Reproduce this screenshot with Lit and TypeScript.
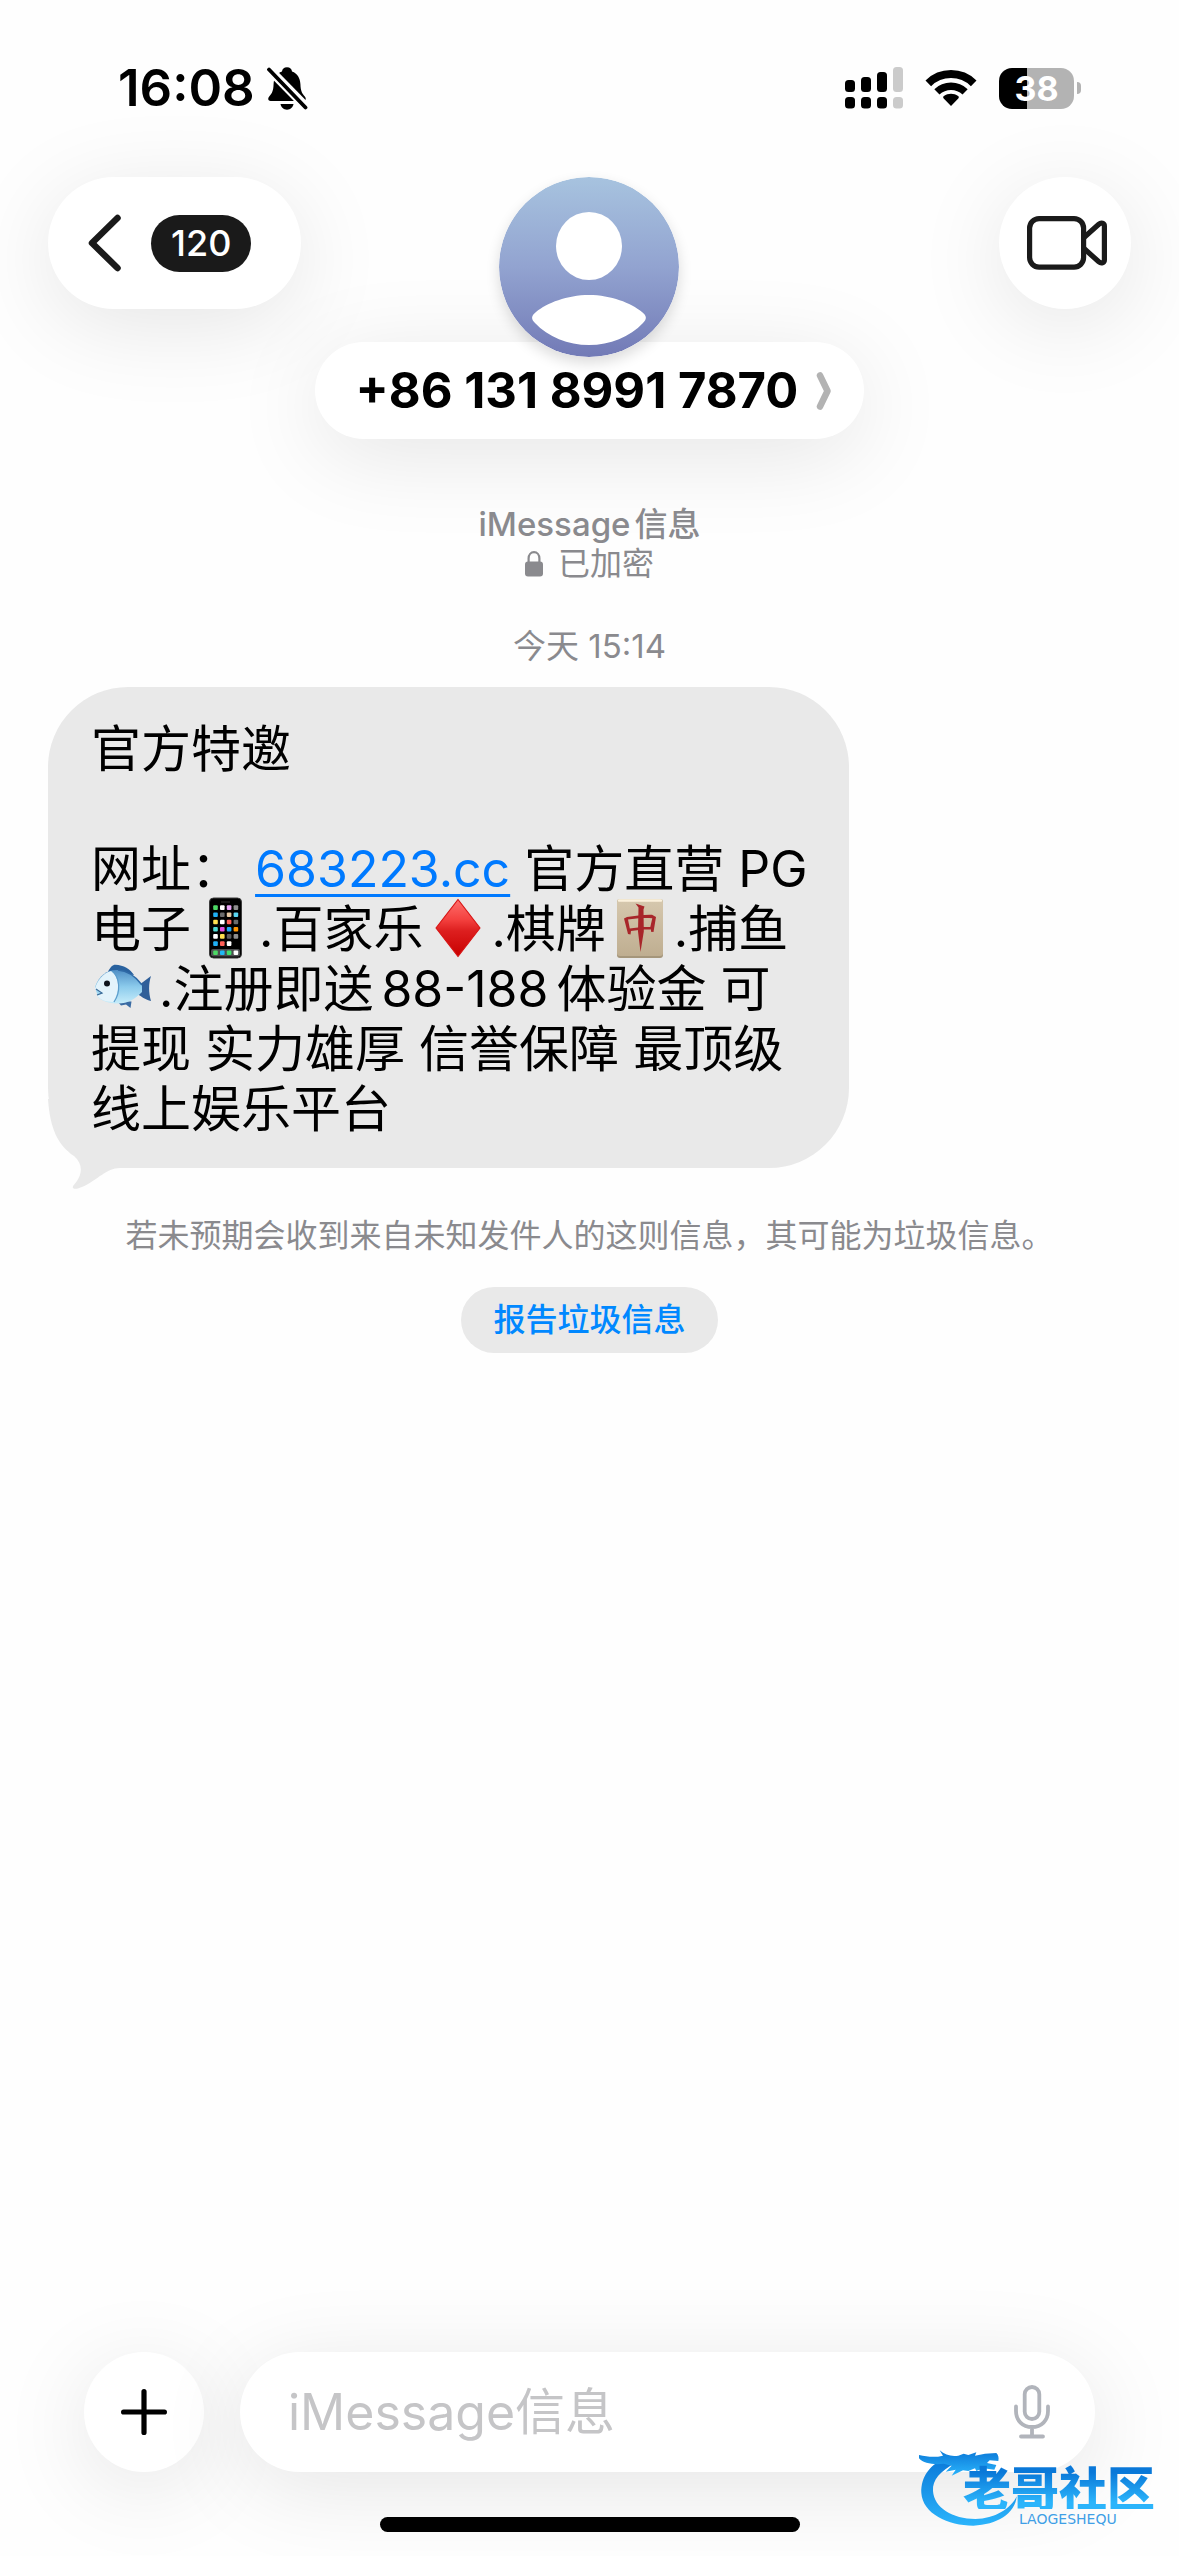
import { LitElement, html, css, svg } from "lit";
import { customElement, property } from "lit/decorators.js";

const bellOff = html`<svg class="bell" viewBox="0 0 42 44" role="img" aria-label="静音">
  <path d="M21 1.3c-3 0-4.8 1.800-5 4.200C10.500 7.500 8 12 7.600 18c-.3 7-1.400 9-4.400 12.600-1.600 2-1.200 4.400 1.400 4.400h32.800c2.600 0 3-2.400 1.400-4.400-3-3.600-4.100-5.600-4.400-12.600C34 12 31.500 7.500 26 5.500c-.2-2.400-2-4.200-5-4.200z"/>
  <path d="M14.500 38h13c-.6 3.400-3 5.700-6.500 5.700s-5.900-2.300-6.500-5.700z"/>
  <path d="M1 1l42 43" stroke="#fefefe" stroke-width="9"/>
  <path d="M3 3.500l36.500 38" stroke="#000" stroke-width="3.800" stroke-linecap="round"/>
</svg>`;

const signalBars = [[0, 13, true], [16, 10, true], [32, 5, true], [48, 0, false]] as const;
const signal = html`<svg class="signal" viewBox="0 0 58 42" role="img" aria-label="信号">
  ${signalBars.map(([x, y, on]) => svg`<g fill=${on ? "#000" : "#cbcbcb"}>
    <rect x=${x} y=${y} width="10" height=${25 - y} rx="3.500"/>
    <rect x=${x} y="30" width="10" height="11.500" rx="3.500"/>
  </g>`)}
</svg>`;

const wifi = html`<svg class="wifi" viewBox="0 0 52 40" role="img" aria-label="无线局域网">
  <g fill="none" stroke="#000" stroke-width="8">
    <path d="M3.300 15.300A32.500 32.500 0 0 1 48.700 15.300"/>
    <path d="M11.900 23.900A20.500 20.500 0 0 1 40.100 23.900" stroke-width="7.500"/>
  </g>
  <path d="M26 38l-7.300-7.600c-.8-.9-.7-1.800.2-2.400 4.200-3 10-3 14.200 0 .9.600 1 1.500.2 2.400z"/>
</svg>`;

const chevronLeft = html`<svg class="back-icon" viewBox="0 0 33 58" aria-hidden="true">
  <path d="M29.500 4L4 29l25.500 25" fill="none" stroke="#1a1a1a" stroke-width="6.500" stroke-linecap="round" stroke-linejoin="round"/>
</svg>`;

const videoIcon = html`<svg class="video-icon" viewBox="0 0 82 56" aria-hidden="true">
  <g fill="none" stroke="#1a1a1a" stroke-width="5.200" stroke-linejoin="round">
    <rect x="3.600" y="3.600" width="54" height="48.500" rx="9.500"/>
    <path d="M58 22.500L72.800 9.200c2.400-2 5.600-1 5.600 1.800v34c0 2.800-3.200 3.800-5.600 1.800L58 33.500"/>
  </g>
</svg>`;

const avatar = html`<svg class="avatar" viewBox="0 0 180 180" role="img" aria-label="联系人头像">
  <defs><linearGradient id="sky" x1="0" y1="0" x2="0" y2="1">
    <stop offset="0" stop-color="#a7c3df"/><stop offset=".5" stop-color="#92a3d0"/><stop offset="1" stop-color="#727ab6"/>
  </linearGradient></defs>
  <circle cx="90" cy="90" r="90" fill="url(#sky)"/>
  <ellipse cx="90" cy="69" rx="33" ry="34" fill="#fff"/>
  <path d="M90 118c22 0 42 8 53 17 5 4 5 7 1 11-13 14-33 22-54 22s-41-8-54-22c-4-4-4-7 1-11 11-9 31-17 53-17z" fill="#fff"/>
</svg>`;

const lock = html`<svg class="lock" viewBox="0 0 18 26" aria-hidden="true">
  <rect x="0" y="10.500" width="18" height="15" rx="3" fill="#8a8a8e"/>
  <path d="M3.600 12V7.500C3.600 3.600 6 1.200 9 1.200s5.400 2.400 5.400 6.300V12" fill="none" stroke="#8a8a8e" stroke-width="2.200"/>
</svg>`;

const appColors = [
  ["#4cd964", "#fff", "#e8a4f5", "#8e8e8e"],
  ["#1fb0f5", "#6b6b6b", "#e5c9a3", "#5ad7f2"],
  ["#ffdf50", "#fff", "#ff5f57", "#6b6b6b"],
  ["#4fd8d2", "#e14fe0", "#1fa9f7", "#ff9500"],
  ["#fff", "#ffe14d", "#5c5c5c", "#8e8e8e"],
  ["#1fb0f5", "#ff5f57", "#fff"],
];
const phoneEmoji = html`<svg class="emoji" viewBox="0 0 68 62" role="img" aria-label="手机">
  <rect x="18.500" y="1" width="32" height="60" rx="4" fill="#000" stroke="#3c3c3c"/>
  <rect x="30" y="4.500" width="9" height="1" fill="#333"/>
  ${appColors.map((row, r) => row.map((c, i) => svg`<rect x=${22.2 + i * 6.8} y=${8.3 + r * 7.2} width="4.600" height="4.600" rx="1" fill=${c}/>`))}
  <rect x="20" y="52" width="29" height="7.500" rx="2" fill="#4c4f50"/>
  ${["#4cd964", "#1fb9f5", "#3fe06a", "#fff"].map((c, i) => svg`<rect x=${22.2 + i * 6.8} y="53.500" width="4.600" height="4.600" rx="1" fill=${c}/>`)}
</svg>`;

const diamondEmoji = html`<svg class="emoji" viewBox="0 0 68 62" role="img" aria-label="方块">
  <defs><linearGradient id="red" x1="0" y1="0" x2="0" y2="1">
    <stop offset="0" stop-color="#ff6f6c"/><stop offset=".35" stop-color="#f4413f"/><stop offset=".55" stop-color="#dd1f1f"/><stop offset="1" stop-color="#c80000"/>
  </linearGradient></defs>
  <path d="M35 2.500L57 31 35 59.500 13 31z" fill="url(#red)" stroke="#d81414" stroke-width="1.200" stroke-linejoin="round"/>
</svg>`;

const tileEmoji = html`<svg class="emoji" viewBox="0 0 68 62" role="img" aria-label="红中">
  <defs><linearGradient id="tile" x1="0" y1="0" x2="0" y2="1">
    <stop offset="0" stop-color="#d6c8ae"/><stop offset="1" stop-color="#bfae91"/>
  </linearGradient></defs>
  <rect x="11" y="2" width="46" height="59" rx="3" fill="#a5967b"/>
  <rect x="11" y="2" width="46" height="57" rx="3" fill="url(#tile)"/>
  <path d="M13 3.500h42" stroke="#fbf1dc" stroke-width="2.400" stroke-linecap="round"/>
  <path d="M18 21.500l3-1.500c8-1.500 17-2.500 25-2.300l4 2.300-2.500 15-2.500-.3v-2.200c-6-.3-14 .3-20 1.500l-.5 3.500-2.500-.5zM22 22.500l1.800 9c6-1.200 14-1.800 20.500-1.500l2-8.800c-8-.6-17 0-24.300 1.300z" fill="#a8262a" fill-rule="evenodd"/>
  <path d="M29.500 6.500l9 3-1 3 .3 22-3.300 20.500-2.500-20.500.5-24z" fill="#a8262a"/>
</svg>`;

const fishEmoji = html`<svg class="emoji" viewBox="0 0 68 62" role="img" aria-label="鱼">
  <defs><linearGradient id="fish" x1="0" y1="0" x2="0" y2="1">
    <stop offset="0" stop-color="#4f8fc6"/><stop offset=".5" stop-color="#8ccbec"/><stop offset="1" stop-color="#c5ecfa"/>
  </linearGradient></defs>
  <path d="M17 15c2-5 5-7.500 7.500-7.300 8 .3 15 4.300 18.500 10.300z" fill="#29629f"/>
  <path d="M26 44l4 4.500 5-1 4.500 3.500 1-6.500z" fill="#3a6ba3"/>
  <path d="M44 31l16-12c-2.500 8-2.500 16 0 25-5-1-11-5-16-9z" fill="#2f5f99"/>
  <path d="M4 30C8 18 17 12.500 27 13c10 .5 18 7 24 15v7c-7 7-14 11.500-24 11.500-9 0-16-2.500-20-6.500z" fill="url(#fish)"/>
  <path d="M20 14c8 5 10 20 2 31-8 0-13-3-16-6l6-3-8-4C6 24 12 16 20 14z" fill="#e3f3fb"/>
  <path d="M21 14c8 6 9 21 2 31" fill="none" stroke="#5b9ccb" stroke-width="1.200"/>
  <path d="M27 13c10 .5 18 7 24 15" fill="none" stroke="#2f6aa6" stroke-width="1.600"/>
  <path d="M5 32l6 4-5 2" fill="none" stroke="#3b6a98" stroke-width="1.200"/>
  <circle cx="16" cy="26.500" r="3" fill="#10151c"/>
</svg>`;

const plusIcon = html`<svg class="plus-icon" viewBox="0 0 46 46" aria-hidden="true">
  <path d="M23 2.600v40.800M2.600 23h40.800" stroke="#000" stroke-width="5.200" stroke-linecap="round"/>
</svg>`;

const micIcon = html`<svg class="mic-icon" viewBox="0 0 36 54" aria-hidden="true">
  <g fill="none" stroke="#b1b4bb" stroke-width="3.800" stroke-linecap="round">
    <rect x="10.700" y="2" width="14.600" height="32" rx="7.300"/>
    <path d="M2 21.500v4.500c0 9.500 6.500 16 16 16s16-6.500 16-16v-4.500M18 42.500v8M7 51.500h22"/>
  </g>
</svg>`;

const dragon = html`<svg class="dragon" viewBox="110 335 300 261" aria-hidden="true">
  <defs><linearGradient id="wave" x1="0" y1="0" x2="0" y2="1">
    <stop offset="0" stop-color="#0a78d8"/><stop offset="1" stop-color="#2bb4fb"/>
  </linearGradient></defs>
  <g fill="url(#wave)">
    <path d="M200 382C146 398 118 440 120 488c4 62 80 98 156 98 70-2 126-36 130-88-16 36-66 68-124 68-68 0-124-34-127-84-2-34 22-60 67-84z"/>
    <path d="M113 374c26 6 48 8 72 2l-10-16c16 14 36 20 56 16l16-6 14 4 24-8-4 10 30-6 34-2c6 6 8 14 6 24l-26-2-8 8 28 6-6 14-32-4-22 8-4-8-20 8-16-2-34 16 12-18-30 6 18-18-24-6c-28 4-60 0-74-16z"/>
  </g>
</svg>`;

@customElement("status-bar")
class StatusBar extends LitElement {
  @property() time = "16:08";
  @property({ type: Number }) battery = 38;
  static styles = css`
    :host { display: flex; align-items: center; justify-content: space-between; padding: 62px 98px 0 118px; height: 52px; }
    .group { display: flex; align-items: center; }
    .left { gap: 11px; }
    .right { gap: 22px; }
    .time { font-size: 51px; line-height: 52px; font-weight: 600; }
    .bell { width: 42px; height: 44px; }
    .signal { width: 58px; height: 42px; }
    .wifi { width: 52px; height: 40px; }
    .battery { display: flex; align-items: center; gap: 3px; }
    .cell { display: flex; align-items: center; justify-content: center; width: 75px; height: 41px; border-radius: 13px; color: #fff; font-size: 34px; line-height: 41px; font-weight: 700; }
    .nub { width: 4px; height: 12px; border-radius: 0 6px 6px 0; background: #b3b3b3; }
  `;
  render() {
    const fill = `background: linear-gradient(90deg, #000 ${this.battery}%, #b3b3b3 ${this.battery}%)`;
    return html`
      <div class="group left"><span class="time">${this.time}</span>${bellOff}</div>
      <div class="group right">${signal}${wifi}
        <div class="battery"><div class="cell" style=${fill}>${this.battery}</div><div class="nub"></div></div>
      </div>`;
  }
}

@customElement("community-mark")
class CommunityMark extends LitElement {
  static styles = css`
    :host { display: flex; }
    .dragon { width: 100px; height: 87px; }
    .words { display: flex; flex-direction: column; margin-left: -55px; padding-top: 21px; }
    .name { font-family: "Noto Sans CJK SC", sans-serif; font-size: 48px; line-height: 46px; font-weight: 900; color: transparent; background: linear-gradient(#0a78d8 20%, #2bb4fb 85%); background-clip: text; -webkit-background-clip: text; }
    .latin { padding-left: 56px; font-family: "DejaVu Sans", sans-serif; font-size: 14px; line-height: 20px; color: #3f9fe6; }
  `;
  render() {
    return html`${dragon}<div class="words"><span class="name">老哥社区</span><span class="latin">LAOGESHEQU</span></div>`;
  }
}

@customElement("app-root")
class AppRoot extends LitElement {
  static styles = css`
    :host { display: flex; flex-direction: column; position: relative; min-height: 100vh; overflow: hidden; background: #fefefe; color: #000; font-family: Inter, "Noto Sans CJK SC", sans-serif; --float: 0 16px 90px rgba(0, 0, 0, 0.1); }
    button { border: 0; padding: 0; margin: 0; font: inherit; color: inherit; background: #fff; cursor: pointer; }
    .bar { display: grid; grid-template-columns: 1fr auto 1fr; align-items: start; padding: 63px 48px 0; }
    .back { display: flex; align-items: center; justify-self: start; gap: 30px; height: 132px; padding: 0 50px 0 40px; border-radius: 66px; box-shadow: var(--float); }
    .back-icon { width: 33px; height: 58px; }
    .count { padding: 0 20px; border-radius: 29px; background: #1a1a1a; color: #fff; font-size: 36px; line-height: 57px; font-weight: 500; }
    .contact { display: flex; flex-direction: column; align-items: center; background: none; }
    .avatar { position: relative; width: 180px; height: 180px; border-radius: 50%; box-shadow: 0 6px 14px rgba(0, 0, 0, 0.14); }
    .name { display: flex; align-items: center; gap: 18px; height: 97px; margin-top: -15px; padding: 0 33px 0 41px; border-radius: 49px; background: #fff; box-shadow: var(--float); font-size: 49px; font-weight: 700; }
    .name svg { width: 15px; height: 38px; }
    .video { display: flex; align-items: center; justify-content: center; justify-self: end; box-sizing: border-box; width: 132px; height: 132px; padding-left: 4px; border-radius: 50%; box-shadow: var(--float); }
    .video-icon { width: 82px; height: 56px; }
    main { flex: 1; display: flex; flex-direction: column; padding: 65px 48px 0; font-size: 32px; line-height: 40px; color: #8a8a8e; }
    .meta { display: flex; flex-direction: column; align-items: center; }
    .service { display: flex; gap: 4px; font-weight: 500; font-size: 33px; }
    .secure { display: flex; align-items: center; gap: 15px; }
    .lock { width: 18px; height: 26px; }
    .stamp { margin-top: 42px; font-size: 33px; }
    .bubble { position: relative; align-self: flex-start; box-sizing: border-box; max-width: 100%; margin-top: 21px; padding: 32px 41px 29px 43px; border-radius: 80px; background: #e9e9e9; color: #000; font-size: 50px; line-height: 60px; }
    .bubble p { position: relative; margin: 0; }
    .blank { height: 60px; }
    .bubble a { color: #007aff; text-decoration: underline; text-decoration-thickness: 3px; text-underline-offset: 7px; }
    .amount { margin: 0 8px; }
    .tail { position: absolute; left: 0; bottom: -21px; width: 90px; height: 90px; }
    .emoji { width: 68px; height: 62px; margin: -10px 0; vertical-align: -2px; }
    .notice { margin: 48px 0 0; text-align: center; }
    .report { align-self: center; margin-top: 31px; height: 66px; padding: 0 32px; border-radius: 33px; background: #e9e9e9; color: #0088ff; font-weight: 500; }
    footer { display: flex; flex-direction: column; align-items: center; padding-bottom: 24px; }
    .compose { display: flex; align-self: stretch; gap: 36px; padding: 0 84px; }
    .plus { display: flex; flex: none; align-items: center; justify-content: center; width: 120px; height: 120px; border-radius: 50%; box-shadow: var(--float); }
    .plus-icon { width: 46px; height: 46px; }
    .field { display: flex; flex: 1; align-items: center; min-width: 0; height: 120px; padding: 0 45px 0 48px; border-radius: 60px; background: #fff; box-shadow: var(--float); }
    .field input { flex: 1; min-width: 0; padding: 0; border: 0; outline: 0; background: none; font: inherit; font-size: 50px; color: #000; }
    .field input::placeholder { color: #c5c5c7; opacity: 1; }
    .mic { display: flex; background: none; }
    .mic-icon { width: 36px; height: 54px; }
    .home { width: 420px; height: 15px; margin-top: 45px; border-radius: 8px; background: #000; }
    community-mark { position: absolute; right: 24px; bottom: 27px; }
  `;
  render() {
    return html`
      <status-bar></status-bar>
      <header class="bar">
        <button class="back" aria-label="返回，120 条未读">${chevronLeft}<span class="count">120</span></button>
        <button class="contact">
          ${avatar}
          <span class="name">+86 131 8991 7870
            <svg viewBox="0 0 15 38" aria-hidden="true"><path d="M4 3.500l7.500 15.500L4 34.500" fill="none" stroke="#b3b3b3" stroke-width="6.500" stroke-linecap="round" stroke-linejoin="round"/></svg>
          </span>
        </button>
        <button class="video" aria-label="视频通话">${videoIcon}</button>
      </header>
      <main>
        <div class="meta">
          <span class="service"><span>iMessage</span><span>信息</span></span>
          <span class="secure">${lock}已加密</span>
          <time class="stamp">今天 15:14</time>
        </div>
        <article class="bubble">
          <svg class="tail" viewBox="0 0 90 90" aria-hidden="true"><path d="M0 0C2 30 10 46 26 57c8 7 9 16 3 25-2 3-5 5-4 7 2 2 6 0 9-1 16-7 24-19 38-19H90V0z" fill="#e9e9e9"/></svg>
          <p>官方特邀</p>
          <p class="blank"></p>
          <p>网址： <a href="#">683223.cc</a> 官方直营 PG<br>电子${phoneEmoji}.百家乐${diamondEmoji}.棋牌${tileEmoji}.捕鱼<br>${fishEmoji}.注册即送<span class="amount">88-188</span>体验金 可<br>提现 实力雄厚 信誉保障 最顶级<br>线上娱乐平台</p>
        </article>
        <p class="notice">若未预期会收到来自未知发件人的这则信息，其可能为垃圾信息。</p>
        <button class="report">报告垃圾信息</button>
      </main>
      <footer>
        <div class="compose">
          <button class="plus" aria-label="添加">${plusIcon}</button>
          <div class="field">
            <input type="text" aria-label="iMessage信息" placeholder="iMessage信息">
            <button class="mic" aria-label="听写">${micIcon}</button>
          </div>
        </div>
        <div class="home"></div>
      </footer>
      <community-mark></community-mark>`;
  }
}
